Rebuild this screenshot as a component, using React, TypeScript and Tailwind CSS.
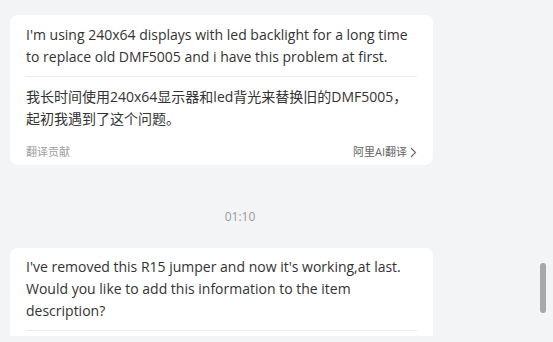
import React from "react";

const font = { fontFamily: '"Open Sans", "Noto Sans CJK SC", sans-serif' };

const Chevron = () => (
  <svg width="7" height="11" viewBox="0 0 7 11" className="ml-[3px]">
    <path d="M1 1l4.5 4.5L1 10" fill="none" stroke="#666" strokeWidth="1.1" />
  </svg>
);

const MessageCard = ({
  original,
  translated,
  top = "pt-[9px]",
}: {
  original: string;
  translated?: string;
  top?: string;
}) => (
  <div className={`w-[423px] rounded-lg bg-white px-4 ${translated ? "pb-1" : "pb-10"} ${top}`}>
    <p className="text-[14px] leading-[22px] text-[#333]">{original}</p>
    <div className="mt-2 border-t border-[#eeeeee]" />
    {translated && (
      <>
        <p className="pt-[9px] text-[14px] leading-[22px] text-[#333]">{translated}</p>
        <div className="mt-[13px] flex items-center justify-between text-[11px] leading-[18px]">
          <span className="text-[#a0a0a0]">翻译贡献</span>
          <span className="flex items-center text-[#666]">
            阿里AI翻译
            <Chevron />
          </span>
        </div>
      </>
    )}
  </div>
);

export default function App() {
  return (
    <div className="relative h-[342px] w-[553px] bg-[#f3f4f6]" style={font}>
      <div className="h-[336px] overflow-hidden pl-[10px] pt-[15px]">
        <div className="w-[460px]">
          <MessageCard
            original="I'm using 240x64 displays with led backlight for a long time to replace old DMF5005 and i have this problem at first."
            translated="我长时间使用240x64显示器和led背光来替换旧的DMF5005，起初我遇到了这个问题。"
          />
          <div className="mt-[43px] text-center text-[12px] leading-[18px] text-[#999]">01:10</div>
          <div className="mt-[22px]">
            <MessageCard
              top="pt-2"
              original="I've removed this R15 jumper and now it's working,at last. Would you like to add this information to the item description?"
            />
          </div>
        </div>
      </div>
      <div className="absolute left-[540px] top-[263px] h-[50px] w-[6px] rounded-full bg-[#a8a8a8]" />
    </div>
  );
}
